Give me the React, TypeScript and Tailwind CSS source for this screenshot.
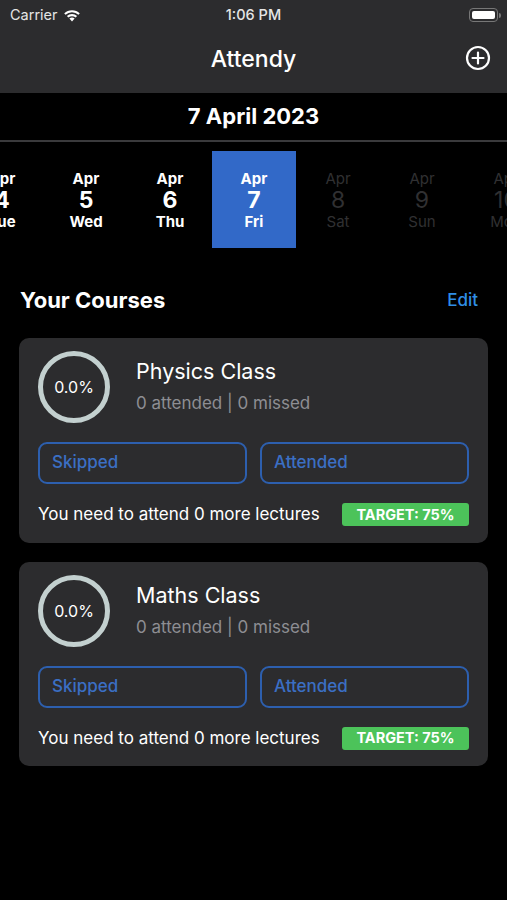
import React from 'react'

const days = [
  { n: 4, d: 'Tue', past: true },
  { n: 5, d: 'Wed', past: true },
  { n: 6, d: 'Thu', past: true },
  { n: 7, d: 'Fri', past: true, selected: true },
  { n: 8, d: 'Sat', past: false },
  { n: 9, d: 'Sun', past: false },
  { n: 10, d: 'Mon', past: false },
]

const courses = ['Physics Class', 'Maths Class']

function CourseCard({ name }: { name: string }) {
  return (
    <div className="rounded-[10px] bg-[#2c2c2e] px-[19px] pt-[13px] pb-[15px]">
      <div className="flex items-center">
        <div className="flex h-[72px] w-[72px] items-center justify-center rounded-full border-[5px] border-[#c3d0cf]">
          <span className="text-[16px] text-white">0.0%</span>
        </div>
        <div className="ml-[26px] -mt-[2px] flex flex-col">
          <span className="text-[21.5px] leading-[26px] text-white">{name}</span>
          <span className="mt-[8px] text-[17px] leading-[22px] text-[#8e8e93]">0 attended | 0 missed</span>
        </div>
      </div>
      <div className="mt-[19px] flex gap-[13px]">
        <button className="h-[42px] flex-1 rounded-[9px] border-2 border-[#2d5fae] px-[12px] text-left text-[17px] font-medium text-[#3b6fc4]">
          Skipped
        </button>
        <button className="h-[42px] flex-1 rounded-[9px] border-2 border-[#2d5fae] px-[12px] text-left text-[17px] font-medium text-[#3b6fc4]">
          Attended
        </button>
      </div>
      <div className="mt-[18px] flex items-center justify-between">
        <span className="text-[17px] text-white">You need to attend 0 more lectures</span>
        <span className="flex h-[23px] w-[127px] items-center justify-center rounded-[3px] bg-[#4cc35a] text-[14.5px] font-bold text-white">
          TARGET: 75%
        </span>
      </div>
    </div>
  )
}

export default function App() {
  return (
    <div
      className="h-[900px] w-[507px] overflow-hidden bg-black text-white"
      style={{ fontFamily: 'Inter, "Noto Sans", sans-serif' }}
    >
      <div className="h-[93px] bg-[#2c2c2e]">
        <div className="relative flex h-[30px] items-center px-[10px]">
          <span className="text-[14.5px] text-[#e5e5e5]">Carrier</span>
          <svg width="18" height="13" viewBox="0 0 18 13" className="ml-[5px]">
            <path d="M9 12.5 L6.4 9.6 A3.8 3.8 0 0 1 11.6 9.6 Z" fill="#fff" />
            <path d="M3.9 7.1 A7.3 7.3 0 0 1 14.1 7.1 L12.6 8.6 A5.2 5.2 0 0 0 5.4 8.6 Z" fill="#fff" />
            <path d="M1.2 4.4 A11 11 0 0 1 16.8 4.4 L15.4 5.8 A9 9 0 0 0 2.6 5.8 Z" fill="#fff" />
          </svg>
          <span className="absolute left-1/2 -translate-x-1/2 text-[14.5px] font-medium text-[#e5e5e5]">1:06 PM</span>
          <div className="absolute right-[6px] top-[8px] flex items-center">
            <div className="flex h-[14px] w-[29px] items-center rounded-[4px] border border-[#777] p-[2px]">
              <div className="h-full w-full rounded-[2px] bg-white" />
            </div>
            <div className="ml-[1px] h-[5px] w-[2px] rounded-r-sm bg-[#777]" />
          </div>
        </div>
        <div className="relative flex h-[63px] items-center justify-center">
          <span className="-mt-[4px] text-[23px] font-medium">Attendy</span>
          <svg width="26" height="26" viewBox="0 0 26 26" className="absolute right-[16px] top-[15px]">
            <circle cx="13" cy="13" r="11" stroke="#fff" strokeWidth="2.2" fill="none" />
            <path d="M13 7.5 V18.5 M7.5 13 H18.5" stroke="#fff" strokeWidth="2.2" strokeLinecap="round" />
          </svg>
        </div>
      </div>

      <div className="flex h-[49px] items-center justify-center border-b-2 border-[#3a3a3c]">
        <span className="text-[22px] font-bold">7 April 2023</span>
      </div>

      <div className="mt-[9px] flex ml-[-40px]">
        {days.map((day) => (
          <div
            key={day.n}
            className={`flex h-[97px] w-[84px] shrink-0 flex-col items-center justify-center ${
              day.selected ? 'bg-[#3269c8]' : ''
            }`}
          >
            <span className={`text-[15px] leading-[19px] ${day.past ? 'font-bold text-white' : 'text-[#303032]'}`}>Apr</span>
            <span className={`text-[23px] leading-[24px] ${day.past ? 'font-bold text-white' : 'text-[#303032]'}`}>{day.n}</span>
            <span className={`text-[15px] leading-[19px] ${day.past ? 'font-bold text-white' : 'text-[#303032]'}`}>{day.d}</span>
          </div>
        ))}
      </div>

      <div className="mt-[36px] flex items-center justify-between pl-[20px] pr-[29px]">
        <span className="text-[22px] font-bold">Your Courses</span>
        <span className="text-[17px] font-medium text-[#2f8ee6]">Edit</span>
      </div>

      <div className="mx-[19px] mt-[21px] flex flex-col gap-[19px]">
        {courses.map((c) => (
          <CourseCard key={c} name={c} />
        ))}
      </div>
    </div>
  )
}
